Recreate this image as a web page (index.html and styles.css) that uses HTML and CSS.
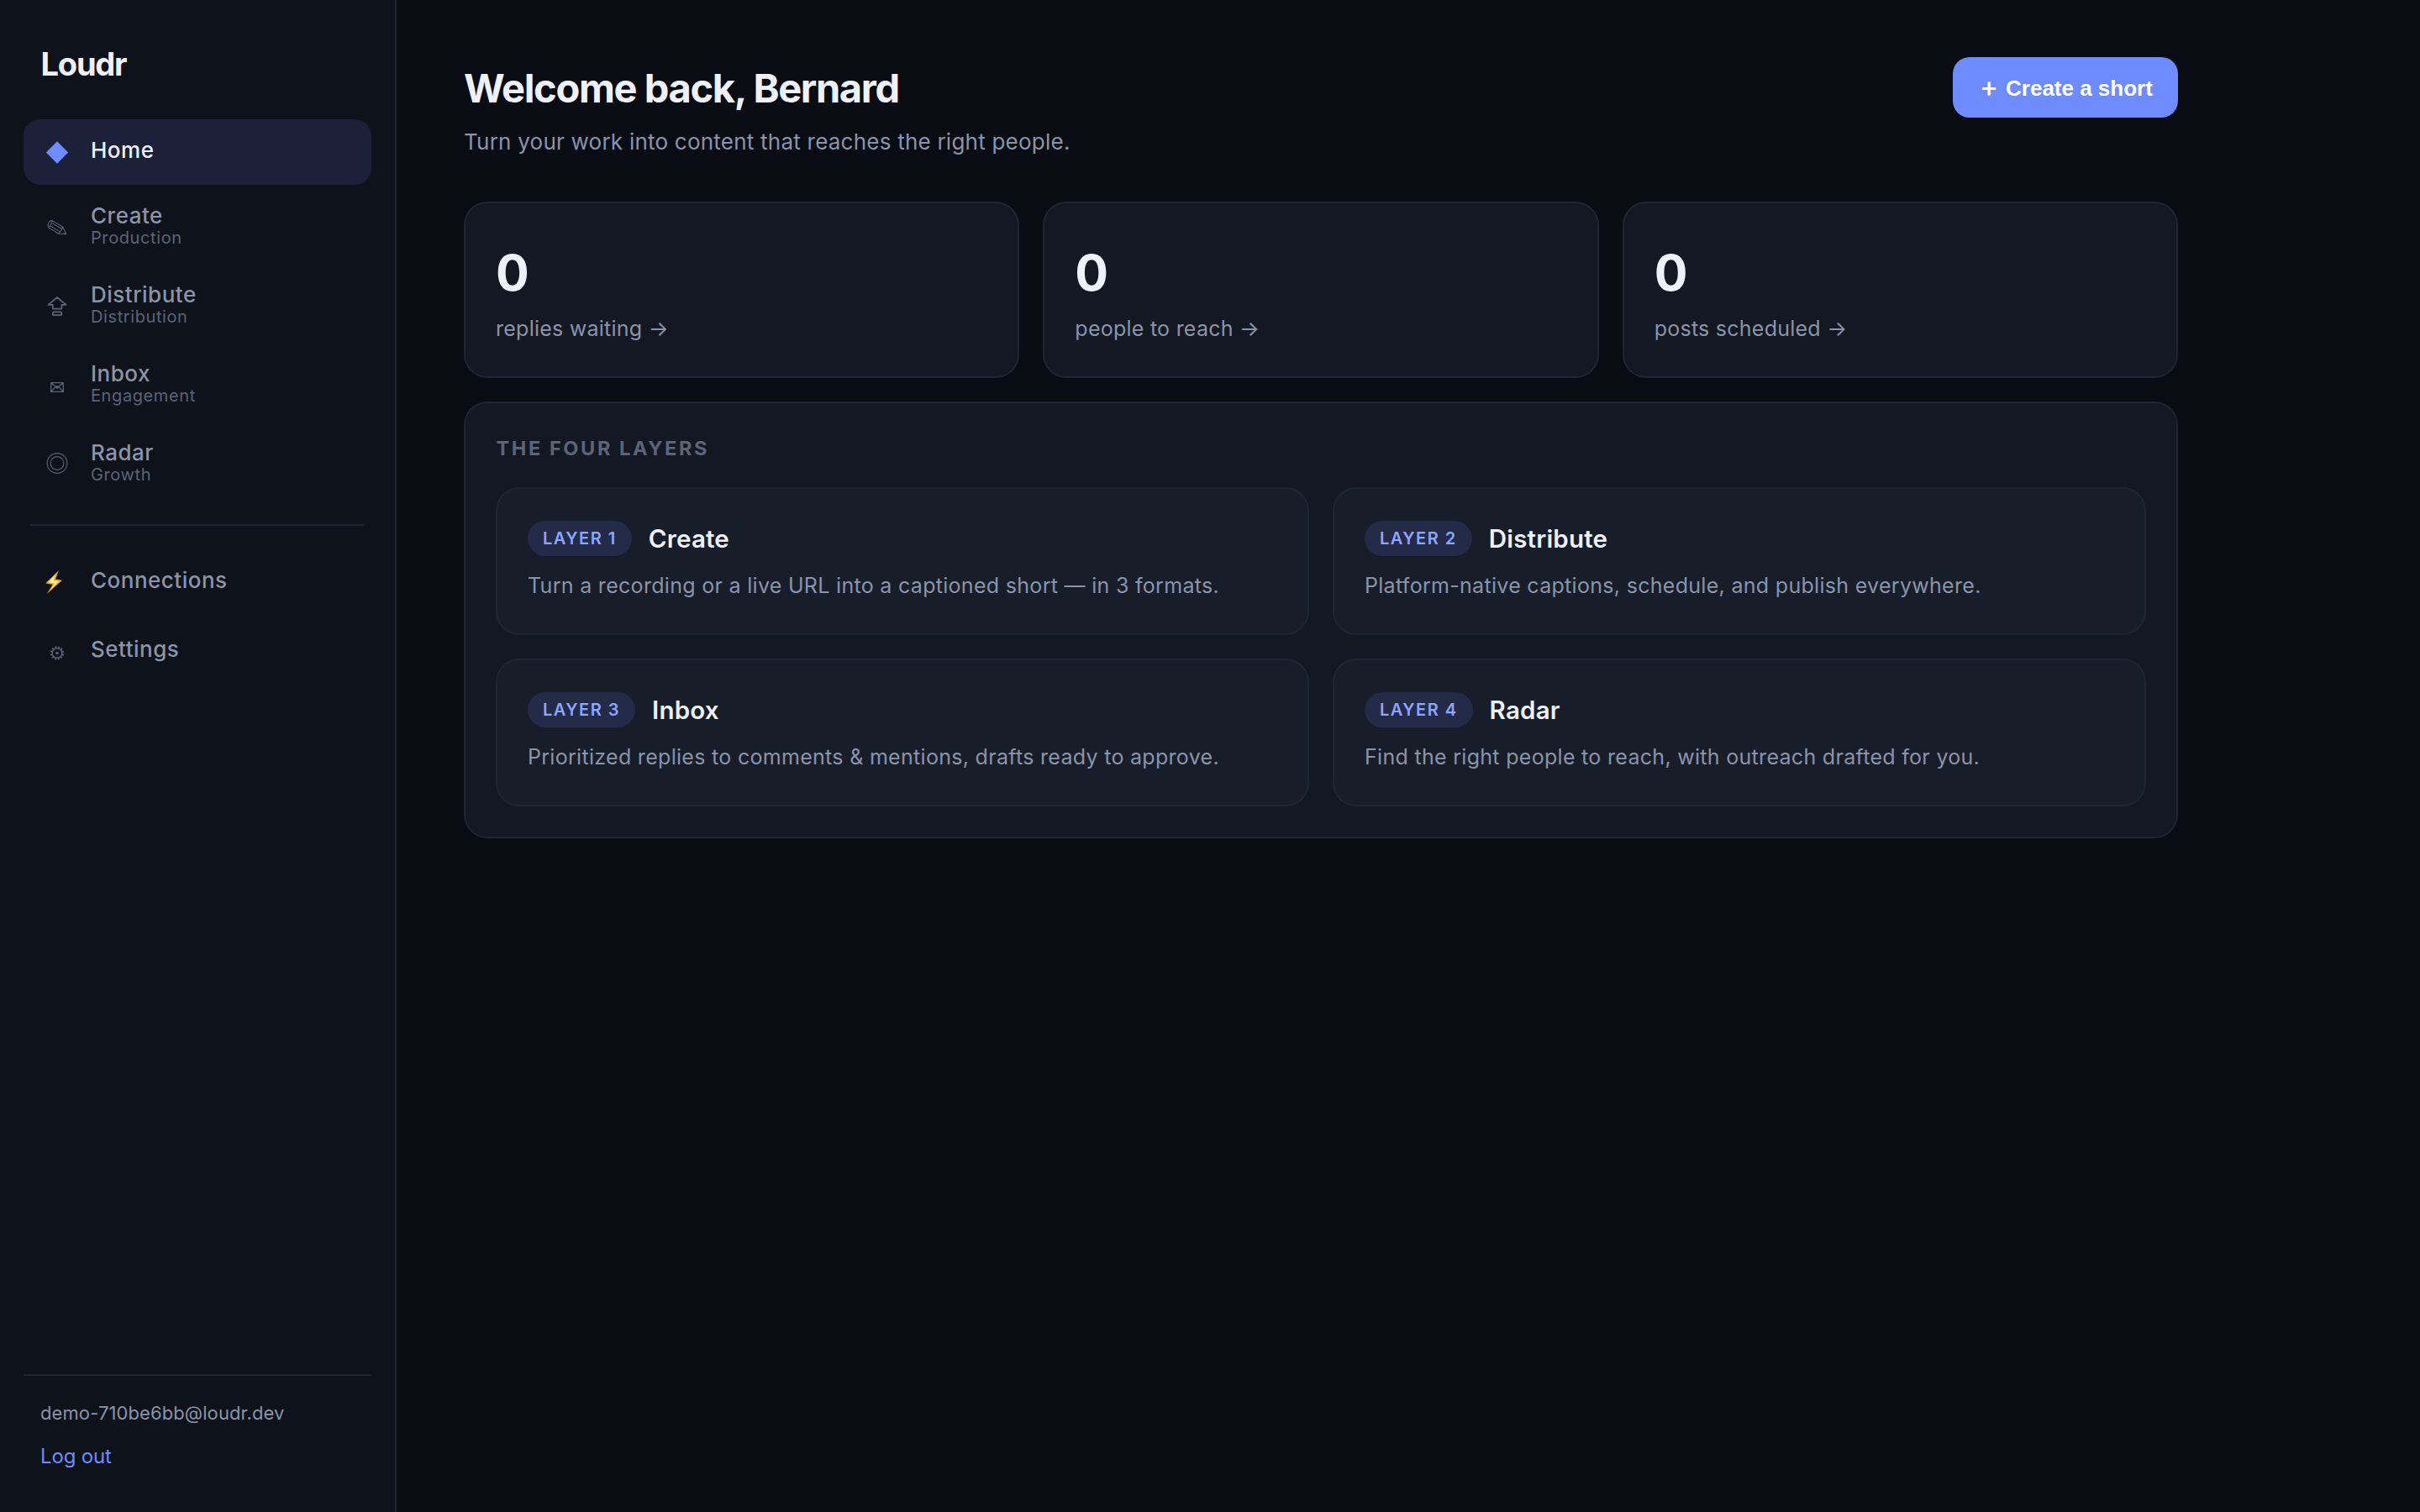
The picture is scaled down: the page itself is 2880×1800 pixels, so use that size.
FILE: index.html
```html
<!DOCTYPE html>
<html lang="en">
<head>
<meta charset="utf-8">
<title>Loudr</title>
<link rel="stylesheet" href="styles.css">
</head>
<body>
<div class="app">
  <aside class="sidebar">
    <div class="brand">Loudr</div>
    <nav class="nav">
      <a class="nav-item active">
        <svg class="icon" viewBox="0 0 32 32"><path fill="currentColor" d="M16 3.3 29.2 16.5 16 29.7 2.8 16.5Z"/></svg>
        <span class="nav-text"><span class="label">Home</span></span>
      </a>
      <a class="nav-item tall">
        <svg class="icon thin" viewBox="0 0 32 32"><path d="M9.6 9.4 22.6 17 26.8 25.6 17.8 25.3 5.4 17.6C4.3 14.2 6 10 9.6 9.4ZM9.6 9.4C11 11 8.6 15.5 5.4 17.6M8 16 20.5 23.4M10.2 12.8 22 19.7M22.6 17 21.4 20.2 19.6 22.8 17.8 25.3M24.8 24.8 26 23.8"/></svg>
        <span class="nav-text"><span class="label">Create</span><span class="sub">Production</span></span>
      </a>
      <a class="nav-item tall">
        <svg class="icon" viewBox="0 0 32 32"><path d="M16 7 26.6 15.9H21.4V20.6H10.8V15.9H5.5ZM12 24.3H20.2Q21.2 24.3 21.2 25.3V27.2Q21.2 28.2 20.2 28.2H12Q11 28.2 11 27.2V25.3Q11 24.3 12 24.3Z"/></svg>
        <span class="nav-text"><span class="label">Distribute</span><span class="sub">Distribution</span></span>
      </a>
      <a class="nav-item tall">
        <svg class="icon" viewBox="0 0 32 32"><path stroke-width="1.3" d="M8.7 14.7H23.3V25.3H8.7ZM8.7 14.7 16 20.8 23.3 14.7M8.7 25.3 14.2 19.6M23.3 25.3 17.8 19.6"/><circle cx="16" cy="19.9" r="1.8" fill="currentColor" stroke="none"/></svg>
        <span class="nav-text"><span class="label">Inbox</span><span class="sub">Engagement</span></span>
      </a>
      <a class="nav-item tall">
        <svg class="icon thin" viewBox="0 0 32 32"><circle cx="16" cy="16.5" r="11.9"/><circle cx="16" cy="16.5" r="7.9"/></svg>
        <span class="nav-text"><span class="label">Radar</span><span class="sub">Growth</span></span>
      </a>
      <hr class="divider">
      <a class="nav-item">
        <svg class="icon" viewBox="0 0 32 32"><path fill="#f5a51c" stroke="none" d="M17.8 2.2 2.3 17.3 10.6 19 3.8 30 22 13.7 14 12.6Z"/><path fill="#fff3b0" stroke="none" d="M15 6.5 5.3 16.2 13 17.7 8 25 18.3 15 11.4 13.8Z"/></svg>
        <span class="nav-text"><span class="label">Connections</span></span>
      </a>
      <a class="nav-item">
        <svg class="icon" viewBox="0 0 32 32"><circle cx="16" cy="18.5" r="5.8" stroke-width="1.4"/><circle cx="16" cy="18.5" r="7.2" stroke-width="2" stroke-dasharray="1.9 1.87" stroke-dashoffset="-.92"/><circle cx="16" cy="18.5" r="1.7" fill="currentColor" stroke="none"/></svg>
        <span class="nav-text"><span class="label">Settings</span></span>
      </a>
    </nav>
    <div class="account">
      <div class="email">demo-710be6bb@loudr.dev</div>
      <a class="logout">Log out</a>
    </div>
  </aside>
  <main class="main">
    <header class="page-head">
      <div>
        <h1 class="title">Welcome back, Bernard</h1>
        <p class="subtitle">Turn your work into content that reaches the right people.</p>
      </div>
      <button class="cta"><span class="plus">+</span><span>Create a short</span></button>
    </header>
    <section class="stats">
      <a class="stat"><span class="num">0</span><span class="stat-label">replies waiting →</span></a>
      <a class="stat"><span class="num">0</span><span class="stat-label">people to reach →</span></a>
      <a class="stat"><span class="num">0</span><span class="stat-label">posts scheduled →</span></a>
    </section>
    <section class="panel">
      <h2 class="panel-title">THE FOUR LAYERS</h2>
      <div class="layers">
        <a class="layer"><div class="layer-head"><span class="badge">LAYER 1</span><span class="layer-name">Create</span></div><p class="desc">Turn a recording or a live URL into a captioned short — in 3 formats.</p></a>
        <a class="layer"><div class="layer-head"><span class="badge">LAYER 2</span><span class="layer-name">Distribute</span></div><p class="desc">Platform-native captions, schedule, and publish everywhere.</p></a>
        <a class="layer"><div class="layer-head"><span class="badge">LAYER 3</span><span class="layer-name">Inbox</span></div><p class="desc">Prioritized replies to comments &amp; mentions, drafts ready to approve.</p></a>
        <a class="layer"><div class="layer-head"><span class="badge">LAYER 4</span><span class="layer-name">Radar</span></div><p class="desc">Find the right people to reach, with outreach drafted for you.</p></a>
      </div>
    </section>
  </main>
</div>
</body>
</html>
```
FILE: styles.css
```css
* { box-sizing: border-box; }
body {
  margin: 0;
  background: #090c13;
  color: #eef1fa;
  font-family: Inter, "Liberation Sans", sans-serif;
  font-size: 26px;
}
h1, h2, p { margin: 0; }
.app { display: flex; height: 1800px; }

.sidebar {
  display: flex;
  flex-direction: column;
  width: 472px;
  padding: 51px 28px 0;
  background: #0e121a;
  border-right: 2px solid #1f2633;
}
.brand {
  height: 91px;
  padding-left: 20.5px;
  font-size: 38px;
  font-weight: 700;
  line-height: 50px;
  letter-spacing: -1.2px;
}
.nav { display: flex; flex-direction: column; gap: 4px; }
.nav-item {
  display: flex;
  align-items: center;
  gap: 24px;
  height: 78px;
  padding: 0 24px;
  border-radius: 20px;
  color: #8a94ab;
}
.nav-item.tall { height: 90px; }
.nav-item.active { background: #1c2039; color: #eef1fa; }
.icon {
  width: 32px;
  height: 32px;
  color: #5b6478;
  fill: none;
  stroke: currentColor;
  stroke-width: 1.8;
  stroke-linejoin: round;
}
.icon.thin { stroke-width: 1.1; }
.active .icon { color: #6e8bff; stroke: none; }
.nav-text { display: flex; flex-direction: column; padding-bottom: 5px; }
.tall .nav-text { padding-bottom: 0; }
.label { font-size: 26px; font-weight: 500; line-height: 28px; letter-spacing: 0.5px; }
.sub { color: #5b6478; font-size: 20px; line-height: 24px; letter-spacing: 0.6px; }
.divider {
  width: 398px;
  height: 2px;
  margin: 24px 8px;
  border: 0;
  background: #1f2633;
}
.account {
  height: 164px;
  margin-top: auto;
  padding: 26px 20px 0;
  border-top: 2px solid #1f2633;
}
.email { color: #8a94ab; font-size: 22px; line-height: 36px; letter-spacing: 0.1px; }
.logout { display: block; margin-top: 17px; color: #6e8bff; font-size: 24px; line-height: 34px; letter-spacing: -0.15px; }

.main { width: 2200px; padding: 68px 80px 0; }
.page-head { display: flex; justify-content: space-between; align-items: flex-start; height: 172px; }
.title { font-size: 47px; font-weight: 700; line-height: 74px; letter-spacing: -1.35px; }
.subtitle { margin-top: 9px; color: #8a94ab; font-size: 26px; line-height: 36px; letter-spacing: 0.23px; }
.cta {
  display: flex;
  align-items: center;
  gap: 9px;
  width: 268px;
  height: 72px;
  padding: 2px 0 0 32px;
  border: 0;
  border-radius: 20px;
  background: #6e8bff;
  color: #fff;
  font: 700 26px "Liberation Sans", Arial, sans-serif;
}
.plus { padding-bottom: 5px; font-family: Inter, sans-serif; font-size: 33px; font-weight: 500; line-height: 30px; }
.stats { display: grid; grid-template-columns: repeat(3, 1fr); gap: 28px; margin-bottom: 28px; }
.stat {
  display: flex;
  flex-direction: column;
  height: 210px;
  padding: 48px 36px 0;
  background: #141822;
  border: 2px solid #1f2633;
  border-radius: 28px;
}
.num { font-size: 59px; font-weight: 700; line-height: 70px; }
.stat-label { margin-top: 13px; color: #8a94ab; font-size: 25px; line-height: 36px; letter-spacing: 0.25px; }
.panel { padding: 36px; background: #141822; border: 2px solid #1f2633; border-radius: 28px; }
.panel-title {
  height: 64px;
  padding-left: 0.5px;
  color: #5b6478;
  font-size: 23.5px;
  font-weight: 700;
  line-height: 36px;
  letter-spacing: 2.6px;
}
.layers { display: grid; grid-template-columns: 1fr 1fr; gap: 28px; }
.layer {
  height: 176px;
  padding: 36px;
  background: #181d2a;
  border: 2px solid #1f2633;
  border-radius: 28px;
}
.layer-head { display: flex; align-items: center; gap: 20px; height: 46px; }
.badge {
  height: 42px;
  padding: 0 18px;
  border-radius: 21px;
  background: #232b49;
  color: #8ea4ff;
  font-size: 20px;
  font-weight: 600;
  line-height: 42px;
  letter-spacing: 1.5px;
}
.layer-name { font-size: 29.5px; font-weight: 600; letter-spacing: 0.2px; }
.desc { margin-top: 15px; color: #8a94ab; font-size: 25px; line-height: 36px; letter-spacing: 0.3px; }
```
